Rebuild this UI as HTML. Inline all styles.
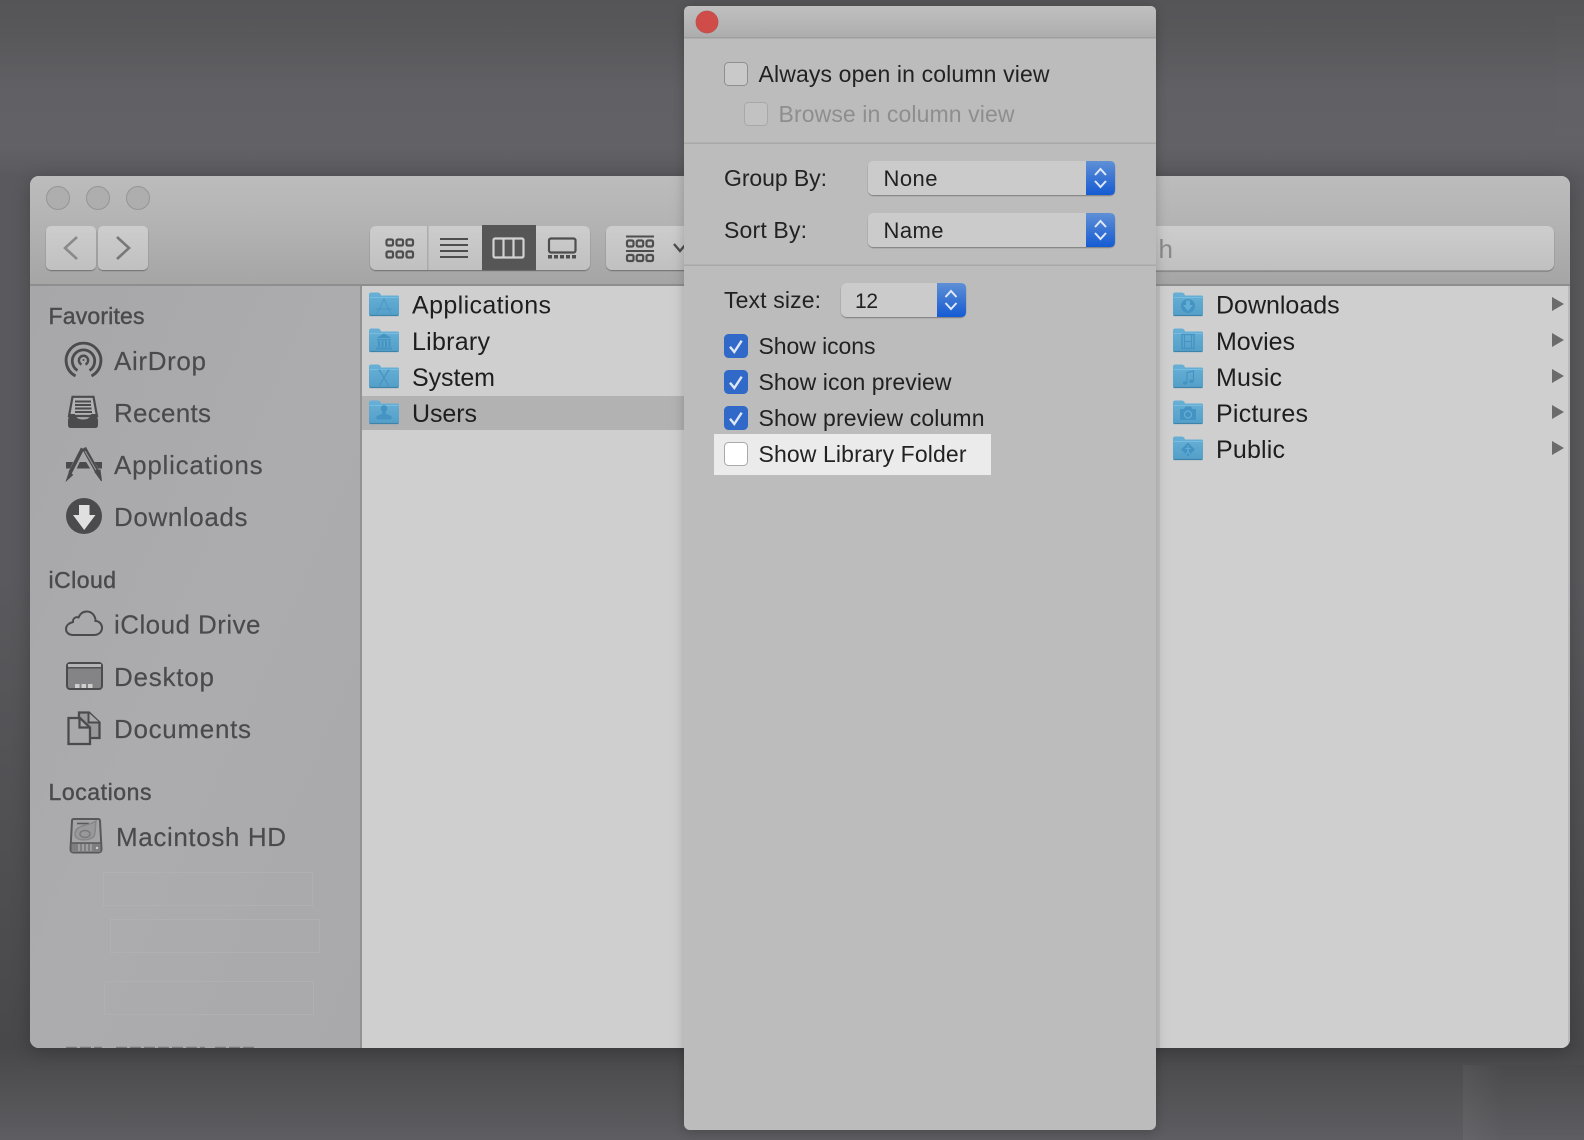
<!DOCTYPE html>
<html><head><meta charset="utf-8"><style>
html,body{margin:0;padding:0;width:1584px;height:1140px;overflow:hidden;background:#5c5c60}
svg{display:block}
text{font-family:"Liberation Sans",sans-serif}
.c{font-size:25px;fill:#1e1e1e}
.s{font-size:26px;fill:#4a4a4c;stroke:#4a4a4c;stroke-width:.15}
.h{font-size:23px;fill:#4a4a4c;stroke:#4a4a4c;stroke-width:.4}
.p{font-size:23px;fill:#222}
.q{font-size:22px;fill:#222}
.b{fill:#4e4e4e}
.l{stroke:#4e4e4e;fill:none}
.k{fill:none;stroke:#4b4b4d}
</style></head><body>
<svg width="1584" height="1140" viewBox="0 0 1584 1140" xmlns="http://www.w3.org/2000/svg">
<defs>
<linearGradient id="bg" x1="0" y1="0" x2="0" y2="1">
<stop offset="0" stop-color="#555558"/><stop offset=".03" stop-color="#58585b"/><stop offset=".08" stop-color="#616165"/><stop offset=".13" stop-color="#626266"/><stop offset=".155" stop-color="#5a5a5e"/><stop offset=".5" stop-color="#5a5a5e"/><stop offset=".92" stop-color="#48484a"/><stop offset="1" stop-color="#5e5e62"/>
</linearGradient>
<linearGradient id="tb" x1="0" y1="0" x2="0" y2="1"><stop offset="0" stop-color="#bcbcbc"/><stop offset=".4" stop-color="#b4b4b4"/><stop offset="1" stop-color="#a5a5a5"/></linearGradient>
<linearGradient id="bt" x1="0" y1="0" x2="0" y2="1"><stop offset="0" stop-color="#cdcdcd"/><stop offset="1" stop-color="#c0c0c0"/></linearGradient>
<linearGradient id="side" x1="0" y1="0" x2="1" y2="1"><stop offset="0" stop-color="#a7a7a9"/><stop offset=".5" stop-color="#acacae"/><stop offset="1" stop-color="#a9a9ab"/></linearGradient>
<linearGradient id="pt" x1="0" y1="0" x2="0" y2="1"><stop offset="0" stop-color="#c0c0c0"/><stop offset="1" stop-color="#adadad"/></linearGradient>
<linearGradient id="blue" x1="0" y1="0" x2="0" y2="1"><stop offset="0" stop-color="#5f90d6"/><stop offset=".5" stop-color="#3a75d4"/><stop offset="1" stop-color="#155bd3"/></linearGradient>
<linearGradient id="fold" x1="0" y1="0" x2="0" y2="1"><stop offset="0" stop-color="#68b0d6"/><stop offset="1" stop-color="#539fc9"/></linearGradient>
<linearGradient id="patch" x1="0" y1="0" x2="0" y2="1"><stop offset="0" stop-color="#4a4a4d"/><stop offset="1" stop-color="#5e5e62"/></linearGradient>
<linearGradient id="patchl" x1="0" y1="0" x2="1" y2="0"><stop offset="0" stop-color="#fff" stop-opacity=".05"/><stop offset="1" stop-color="#fff" stop-opacity="0"/></linearGradient>
<filter id="sh" x="-10%" y="-10%" width="120%" height="125%"><feDropShadow dx="0" dy="4" stdDeviation="10" flood-color="#000" flood-opacity=".22"/></filter>
<filter id="psh" x="-10%" y="-5%" width="120%" height="110%"><feDropShadow dx="0" dy="2" stdDeviation="6" flood-color="#000" flood-opacity=".22"/></filter>
<filter id="bs" x="-10%" y="-10%" width="120%" height="130%"><feDropShadow dx="0" dy="1" stdDeviation=".5" flood-color="#000" flood-opacity=".35"/></filter>
<clipPath id="win"><rect x="30" y="176" width="1540" height="872" rx="9"/></clipPath>
<g id="folder">
<path d="M0 3Q0 .5 2 .5H9Q10.5 .5 11.5 2L12 3.5H28.5Q30 3.5 30 5V22Q30 24 28 24H2Q0 24 0 22Z" fill="url(#fold)"/>
<path d="M.5 5.5H29.5" stroke="#78bddf" stroke-width="1"/>
<path d="M.5 23.5H29.5" stroke="#3f83aa" stroke-width="1.2"/>
</g>
</defs>

<rect width="1584" height="1140" fill="url(#bg)"/>
<rect x="1556" y="16" width="28" height="120" fill="#fff" opacity=".012"/>
<rect x="1463" y="1065" width="121" height="75" fill="url(#patch)"/>
<rect x="1463" y="1065" width="40" height="75" fill="url(#patchl)"/>

<!-- Finder window -->
<rect x="30" y="176" width="1540" height="872" rx="9" fill="#cfcfcf" filter="url(#sh)"/>
<g clip-path="url(#win)">
<rect x="30" y="176" width="1540" height="109" fill="url(#tb)"/>
<rect x="30" y="284" width="1540" height="2" fill="#8e8e8e"/>
<rect x="30" y="286" width="330" height="762" fill="url(#side)"/>
<rect x="360" y="286" width="2" height="762" fill="#929294"/>
<rect x="362" y="286" width="1208" height="762" fill="#cfcfcf"/>
<rect x="362" y="396" width="330" height="34" fill="#b2b2b2"/>
<rect x="1156" y="286" width="4" height="762" fill="#c3c3c3"/>
<rect x="1568" y="286" width="2" height="762" fill="#b9b9b9"/>
<path d="M66 1047.4H102M116 1047.4H205M215 1047.4H255" stroke="#7a7a7c" stroke-width="1.2" stroke-dasharray="11 3"/>
</g>

<!-- Traffic lights -->
<circle cx="58" cy="198" r="11.5" fill="#aeaeae" stroke="#959595"/>
<circle cx="98" cy="198" r="11.5" fill="#aeaeae" stroke="#959595"/>
<circle cx="138" cy="198" r="11.5" fill="#aeaeae" stroke="#959595"/>

<!-- Nav -->
<rect x="46" y="226" width="50" height="44" rx="5" fill="url(#bt)" filter="url(#bs)"/>
<rect x="98" y="226" width="50" height="44" rx="5" fill="url(#bt)" filter="url(#bs)"/>
<path d="M77 237L65 248L77 259" fill="none" stroke="#8a8a8a" stroke-width="2.6"/>
<path d="M117 237L129 248L117 259" fill="none" stroke="#777" stroke-width="2.6"/>

<!-- View group -->
<rect x="370" y="226" width="220" height="44" rx="6" fill="url(#bt)" filter="url(#bs)"/>
<rect x="427" y="226" width="1.5" height="44" fill="#ababab"/>
<rect x="482" y="225" width="54" height="45.5" fill="#565656"/>
<g class="l" stroke-width="2.2">
<rect x="386.5" y="239.5" width="6.5" height="6" rx="1.5"/><rect x="396.5" y="239.5" width="6.5" height="6" rx="1.5"/><rect x="406.5" y="239.5" width="6.5" height="6" rx="1.5"/>
<rect x="386.5" y="251.5" width="6.5" height="6" rx="1.5"/><rect x="396.5" y="251.5" width="6.5" height="6" rx="1.5"/><rect x="406.5" y="251.5" width="6.5" height="6" rx="1.5"/>
</g>
<path d="M440 239H468M440 245H468M440 251H468M440 257H468" class="l" stroke-width="2"/>
<g fill="none" stroke="#d2d2d2" stroke-width="2.2"><rect x="493.5" y="238.5" width="30" height="19" rx="1.5"/><path d="M503.5 238.5V257.5M513.5 238.5V257.5"/></g>
<rect x="549" y="238.5" width="26.5" height="14" rx="2" class="l" stroke-width="2.2"/>
<g class="b"><rect x="548" y="255" width="4" height="3.5"/><rect x="554" y="255" width="4" height="3.5"/><rect x="560" y="255" width="4" height="3.5"/><rect x="566" y="255" width="4" height="3.5"/><rect x="572" y="255" width="4" height="3.5"/></g>
<!-- Arrange -->
<rect x="606" y="226" width="100" height="44" rx="6" fill="url(#bt)" filter="url(#bs)"/>
<path d="M626 236.5H654M626 251H654" class="l" stroke-width="2"/>
<g class="l" stroke-width="2.2">
<rect x="627" y="240.5" width="6.5" height="6" rx="1.5"/><rect x="636.7" y="240.5" width="6.5" height="6" rx="1.5"/><rect x="646.5" y="240.5" width="6.5" height="6" rx="1.5"/>
<rect x="627" y="255" width="6.5" height="6" rx="1.5"/><rect x="636.7" y="255" width="6.5" height="6" rx="1.5"/><rect x="646.5" y="255" width="6.5" height="6" rx="1.5"/>
</g>
<path d="M674 244L680 251L686 244" class="l" stroke-width="2.4"/>
<!-- Search -->
<rect x="1100" y="226" width="454" height="44.5" rx="7" fill="url(#bt)" filter="url(#bs)"/>
<text y="258" font-size="26" fill="#8a8a8a"><tspan x="1086">Searc</tspan><tspan x="1158.5">h</tspan></text>

<!-- Sidebar text -->
<text x="48.5" y="324" class="h" textLength="96">Favorites</text>
<text x="114" y="370" class="s" textLength="92">AirDrop</text>
<text x="114" y="422" class="s" textLength="97">Recents</text>
<text x="114" y="474" class="s" textLength="148.6">Applications</text>
<text x="114" y="526" class="s" textLength="133.5">Downloads</text>
<text x="48.5" y="588" class="h" textLength="67.5">iCloud</text>
<text x="114" y="633.5" class="s" textLength="146.5">iCloud Drive</text>
<text x="114" y="686" class="s" textLength="100">Desktop</text>
<text x="114" y="738" class="s" textLength="137">Documents</text>
<text x="48.5" y="800" class="h" textLength="103">Locations</text>
<text x="116" y="846" class="s" textLength="170">Macintosh HD</text>

<!-- Sidebar icons -->
<g class="k">
<path d="M75.5 376A17.4 17.4 0 1 1 91.5 376" stroke-width="2.8"/>
<path d="M77.5 370.5A11.2 11.2 0 1 1 89.5 370.5" stroke-width="2.8"/>
<path d="M81.5 364.5A4.6 4.6 0 1 1 85.5 364.5" stroke-width="2.4"/>
</g>
<circle cx="83.5" cy="360" r="1" fill="#4b4b4d"/>
<!-- Recents -->
<path d="M72.5 396.8H93.5L97 416H69Z" fill="#b2b2b4" stroke="#4b4b4d" stroke-width="2.2"/>
<path d="M75 401.5H91M75 405H91M75 408.5H91.5M75 412H92" stroke="#4b4b4d" stroke-width="2"/>
<path d="M69.5 414L68 420V425Q68 428 71 428H95Q98 428 98 425V420L96.5 414H91Q90 419.5 83 419.5Q76 419.5 75 414Z" fill="#4b4b4d"/>
<!-- Applications -->
<rect x="66" y="462" width="36" height="6.5" fill="#4b4b4d"/>
<path d="M82 450L69 478" stroke="#a9a9ab" stroke-width="6"/>
<path d="M83 450L100 478" stroke="#a9a9ab" stroke-width="7"/>
<path d="M82.5 448.5L70 473" stroke="#4b4b4d" stroke-width="3.6"/>
<path d="M69.5 471.5L66.5 480.5L72.5 475Z" fill="#4b4b4d" stroke="#4b4b4d"/>
<path d="M84 448L98 473" stroke="#4b4b4d" stroke-width="4.4"/>
<path d="M85 451L96 470" stroke="#98989a" stroke-width="1.1"/>
<path d="M95 472L101.5 481L100 470Z" fill="#4b4b4d" stroke="#4b4b4d"/>
<!-- Downloads -->
<circle cx="84" cy="516" r="18" fill="#4b4b4d"/>
<path d="M79 505H89.5V515H95.5L84.2 530L73 515H79Z" fill="#e0e0e0"/>
<!-- Cloud -->
<path d="M73 635H94C99 635 102 631.5 102 628C102 624 99 621 95.5 621C95.5 615.5 91.5 611.5 87 611.5C83 611.5 80 614 78.5 617.5C76 616.5 73 618 73 621.5L73 622C69 623 66 625.5 66 629C66 632.5 69 635 73 635Z" class="k" stroke-width="2"/>
<!-- Desktop -->
<rect x="67" y="663" width="35" height="26" rx="3" fill="#848486" stroke="#4b4b4d" stroke-width="2"/>
<rect x="68" y="664" width="33" height="3" fill="#b5b5b7"/>
<path d="M67 667.8H102" stroke="#4b4b4d" stroke-width="1.4"/>
<rect x="75" y="684" width="4.5" height="4" fill="#cfcfcf"/><rect x="81.5" y="684" width="4.5" height="4" fill="#cfcfcf"/><rect x="88" y="684" width="4.5" height="4" fill="#cfcfcf"/>
<!-- Documents -->
<path d="M79 712.5H89L99.5 722.5V738H79Z" fill="#99999b" stroke="#4b4b4d" stroke-width="2.3"/>
<path d="M88.5 712.5V722.5H99.5" fill="#a9a9ab" stroke="#4b4b4d" stroke-width="2"/>
<path d="M68.5 718H80L90 727.5V744H68.5Z" fill="#a9a9ab" stroke="#4b4b4d" stroke-width="2.3"/>
<path d="M79.5 718V727.5H90" fill="none" stroke="#4b4b4d" stroke-width="2.2"/>
<!-- HD -->
<path d="M73.5 819H98Q100 819 100 821L101.5 849Q101.5 852.5 98 852.5H74Q70.5 852.5 70.5 849L72 821Q72 819 73.5 819Z" fill="#a4a4a6" stroke="#58585a" stroke-width="2"/>
<path d="M77 823.5H89" stroke="#58585a" stroke-width="1.6"/>
<path d="M75 834C75 828 81 826 86 825C91 824 94 822 96 821C95 826 96 831 94 836C91 841 75 842 75 834Z" fill="#99999b" stroke="#86868a" stroke-width="1.5"/>
<ellipse cx="85" cy="834" rx="5" ry="3.5" fill="none" stroke="#7a7a7c" stroke-width="1.5"/>
<rect x="71.5" y="843" width="29" height="9" fill="#7e7e81"/>
<path d="M71 843H101" stroke="#58585a" stroke-width="1.4"/>
<path d="M79 844V851M83 844V851M87 844V851M91 844V851" stroke="#b0b0b2" stroke-width="1.3"/>
<circle cx="97" cy="848" r="1.2" fill="#cfcfcf"/>

<!-- Placeholder boxes -->
<g fill="none" stroke="#fff" stroke-opacity=".07" stroke-width="1">
<rect x="103.5" y="872.5" width="209" height="33"/>
<rect x="110.5" y="919.5" width="209" height="33"/>
<rect x="104.5" y="981.5" width="209" height="33"/>
</g>

<!-- Left column -->
<use href="#folder" x="369" y="292"/><use href="#folder" x="369" y="328"/><use href="#folder" x="369" y="364"/><use href="#folder" x="369" y="400"/>
<g fill="none" stroke="#4a97c4" stroke-width="1">
<path d="M384 299L377 314M384 299L391 314M376 309H392"/>
</g>
<g fill="#4493c2">
<path d="M384 333.5L376.5 338H391.5Z"/><rect x="377" y="339" width="14" height="1.4"/><rect x="378" y="341" width="2" height="6"/><rect x="381.5" y="341" width="2" height="6"/><rect x="385" y="341" width="2" height="6"/><rect x="388.5" y="341" width="2" height="6"/><rect x="376" y="347.5" width="16" height="2"/>
<circle cx="384" cy="408.5" r="3.3"/><path d="M382.5 411H385.5L386 414L391.5 416V419.5H376.5V416L382 414Z"/>
</g>
<path d="M379 369.5L389 386M389 369.5L379 386" stroke="#4a97c4" stroke-width="1.6" fill="none"/>
<text x="412" y="313.3" class="c" textLength="139">Applications</text>
<text x="412" y="350" class="c" textLength="78">Library</text>
<text x="412" y="386" class="c" textLength="83">System</text>
<text x="412" y="422" class="c" textLength="65">Users</text>

<!-- Right column -->
<use href="#folder" x="1173" y="292"/><use href="#folder" x="1173" y="328"/><use href="#folder" x="1173" y="364"/><use href="#folder" x="1173" y="400"/><use href="#folder" x="1173" y="436"/>
<circle cx="1188" cy="306" r="7" fill="#4493c2"/><path d="M1186 300.5H1190V305H1193L1188 311L1183 305H1186Z" fill="#62aed6"/>
<rect x="1182" y="334.5" width="12" height="14" fill="none" stroke="#4493c2" stroke-width="1.4"/><path d="M1184.5 335V348M1191.5 335V348M1185 341.5H1191" stroke="#4493c2" stroke-width="1"/>
<path d="M1187 383V372.5L1193.5 371V381" fill="none" stroke="#4493c2" stroke-width="1.2"/><ellipse cx="1185" cy="383" rx="2.3" ry="1.8" fill="#4493c2"/><ellipse cx="1191.5" cy="381.3" rx="2.3" ry="1.8" fill="#4493c2"/>
<path d="M1180 409H1184L1185.5 406.5H1191L1192.5 409H1196V420H1180Z" fill="#4493c2"/><circle cx="1188" cy="414.5" r="3.5" fill="none" stroke="#62aed6" stroke-width="1.3"/>
<path d="M1188 442.5L1195 449.5L1188 456.5L1181 449.5Z" fill="#4493c2"/><path d="M1188 445.5V452M1185.5 448.5H1190.5M1188 451.5L1186 454.5M1188 451.5L1190 454.5" stroke="#62aed6" stroke-width="1.1" fill="none"/>
<text x="1216" y="313.3" class="c" textLength="123.6">Downloads</text>
<text x="1216" y="350" class="c" textLength="79">Movies</text>
<text x="1216" y="386" class="c" textLength="66">Music</text>
<text x="1216" y="422" class="c" textLength="92">Pictures</text>
<text x="1216" y="458" class="c" textLength="69">Public</text>
<g fill="#6b6b6b"><path d="M1552 297L1564 304L1552 311Z"/><path d="M1552 333L1564 340L1552 347Z"/><path d="M1552 369L1564 376L1552 383Z"/><path d="M1552 405L1564 412L1552 419Z"/><path d="M1552 441L1564 448L1552 455Z"/></g>

<!-- Panel -->
<rect x="684" y="6" width="472" height="1124" rx="6" fill="#bcbcbc" filter="url(#psh)"/>
<path d="M684 37V12Q684 6 690 6H1150Q1156 6 1156 12V37Z" fill="url(#pt)"/>
<rect x="684" y="37" width="472" height="1.5" fill="#9f9f9f"/>
<circle cx="707" cy="22" r="11" fill="#d04c49" stroke="#b9504d" stroke-width=".8"/>
<rect x="684" y="142.5" width="472" height="1.5" fill="#a9a9a9"/>
<rect x="684" y="264.5" width="472" height="1.5" fill="#a9a9a9"/>

<!-- Checkboxes top -->
<rect x="724.5" y="62.5" width="23" height="23" rx="4" fill="#c9c9c9" stroke="#8f8f8f"/>
<text x="758.5" y="82" class="p" textLength="291">Always open in column view</text>
<rect x="744.5" y="102.5" width="23" height="23" rx="4" fill="#c2c2c2" stroke="#a8a8a8"/>
<text x="778.5" y="122" class="p" style="fill:#8e8e8e" textLength="236">Browse in column view</text>

<!-- Selects -->
<text x="724" y="186" class="p" textLength="103">Group By:</text>
<rect x="868" y="161" width="247" height="34" rx="5" fill="#cbcbcb" filter="url(#bs)"/>
<path d="M1086 161H1110Q1115 161 1115 166V190Q1115 195 1110 195H1086Z" fill="url(#blue)"/>
<path d="M1095 175L1100.5 169L1106 175M1095 181L1100.5 187L1106 181" fill="none" stroke="#dfe8f6" stroke-width="2"/>
<text x="883.5" y="186" class="q" textLength="54">None</text>

<text x="724" y="238" class="p" textLength="83">Sort By:</text>
<rect x="868" y="213" width="247" height="34" rx="5" fill="#cbcbcb" filter="url(#bs)"/>
<path d="M1086 213H1110Q1115 213 1115 218V242Q1115 247 1110 247H1086Z" fill="url(#blue)"/>
<path d="M1095 227L1100.5 221L1106 227M1095 233L1100.5 239L1106 233" fill="none" stroke="#dfe8f6" stroke-width="2"/>
<text x="883.5" y="238" class="q" textLength="60">Name</text>

<text x="724" y="308" class="p" textLength="97">Text size:</text>
<rect x="841" y="283" width="125" height="34" rx="6" fill="#cbcbcb" filter="url(#bs)"/>
<path d="M937 283H961Q966 283 966 288V312Q966 317 961 317H937Z" fill="url(#blue)"/>
<path d="M945.5 297L951 291L956.5 297M945.5 303L951 309L956.5 303" fill="none" stroke="#dfe8f6" stroke-width="2"/>
<text x="855" y="308" style="font-size:21px;fill:#222" textLength="23">12</text>

<!-- Checked -->
<rect x="724" y="334" width="24" height="24" rx="4.5" fill="#3169c9"/>
<path d="M730 346.7L734.3 352L741.7 340.7" fill="none" stroke="#dfe7f5" stroke-width="2.4"/>
<text x="758.5" y="354" class="p" textLength="117">Show icons</text>
<rect x="724" y="370" width="24" height="24" rx="4.5" fill="#3169c9"/>
<path d="M730 382.7L734.3 388L741.7 376.7" fill="none" stroke="#dfe7f5" stroke-width="2.4"/>
<text x="758.5" y="390" class="p" textLength="193">Show icon preview</text>
<rect x="724" y="406" width="24" height="24" rx="4.5" fill="#3169c9"/>
<path d="M730 418.7L734.3 424L741.7 412.7" fill="none" stroke="#dfe7f5" stroke-width="2.4"/>
<text x="758.5" y="426" class="p" textLength="226">Show preview column</text>

<rect x="714" y="434" width="277" height="41" fill="#ebebeb"/>
<rect x="724.5" y="442.5" width="23" height="23" rx="4" fill="#fff" stroke="#a9a9a9"/>
<text x="758.5" y="462" class="p" textLength="208">Show Library Folder</text>
</svg>
</body></html>
